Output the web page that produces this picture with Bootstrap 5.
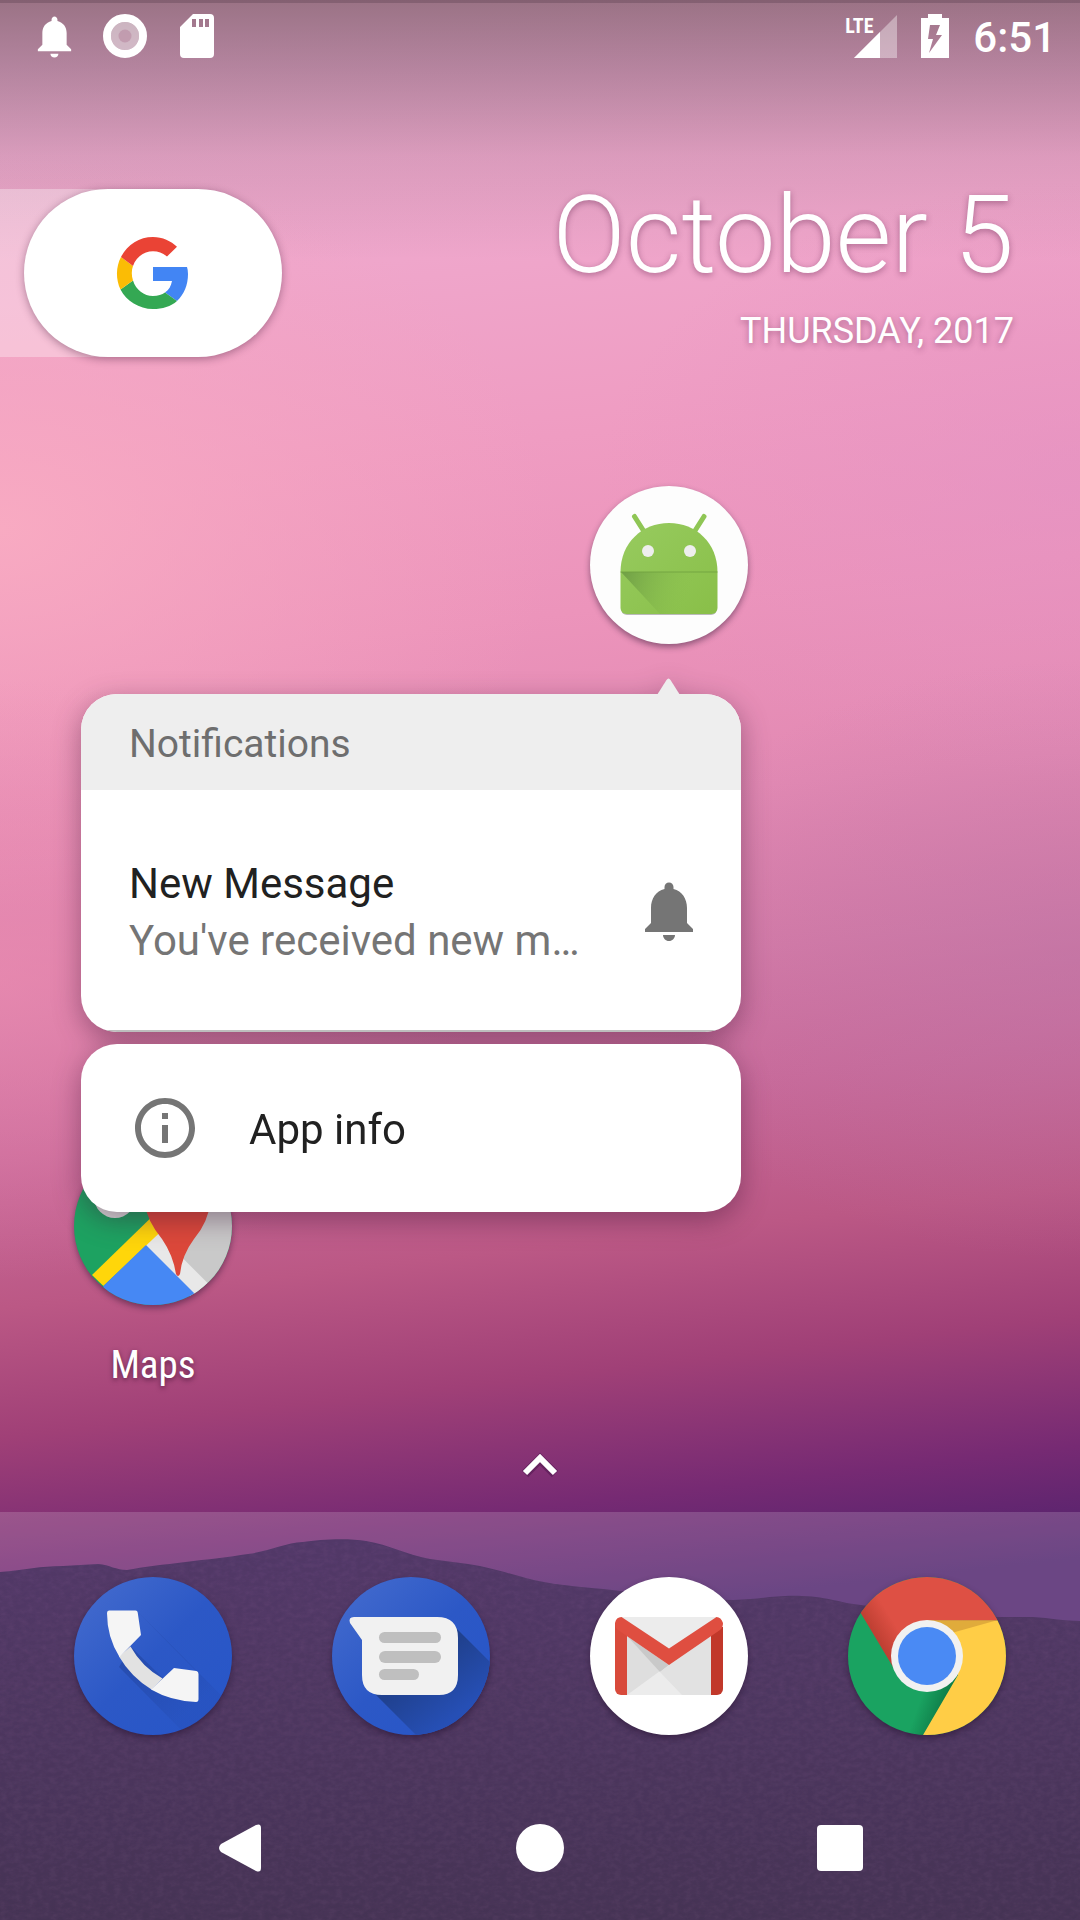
<!DOCTYPE html>
<html lang="en">
<head>
<meta charset="utf-8">
<meta name="viewport" content="width=device-width, initial-scale=1">
<title>Home screen</title>
<link href="https://cdn.jsdelivr.net/npm/bootstrap@5.3.0/dist/css/bootstrap.min.css" rel="stylesheet">
<style>
  body { font-family: Roboto, "Open Sans", sans-serif; background: #4b3459; }
  button { appearance: none; border: 0; padding: 0; background: none; color: inherit; display: block; }
  svg { display: block; overflow: visible; }
  .wallpaper { z-index: -1; }
  .status-bar { height: 72px; padding: 0 24px 0 31px; }
  .status-left { gap: 25px; }
  .clock { font-size: 42px; line-height: 42px; font-weight: 500; padding-top: 4px; }
  .lte-label { font-family: "Roboto Condensed", Roboto, sans-serif; font-size: 20px; line-height: 20px; font-weight: 700; top: 1px; left: -9px; }
  .widget-row { margin-top: 117px; height: 168px; }
  .search-tab { width: 282px; padding-left: 24px; }
  .search-tab::before { content: ""; position: absolute; inset: 0 156px 0 0; background: rgba(255,255,255,.32); }
  .search-pill { position: relative; width: 258px; height: 168px; border-radius: 84px; background: #fff; box-shadow: 0 2px 8px rgba(60,20,50,.4); }
  .date-widget { padding-right: 66px; text-shadow: 0 2px 6px rgba(90,30,70,.45); }
  .date-day { font-size: 108px; line-height: 108px; font-weight: 300; margin-top: -8px; }
  .date-year { font-size: 36px; line-height: 48px; margin-top: 18px; }
  .cells { padding: 0 24px; }
  .row-one { margin-top: 129px; }
  .row-two { margin-top: 503px; }
  .launcher { filter: drop-shadow(0 3px 3px rgba(30,10,40,.45)); }
  .launcher-label { font-family: "Roboto Condensed", Roboto, sans-serif; font-size: 39px; line-height: 48px; margin-top: 36px; color: #fff; text-shadow: 0 2px 5px rgba(50,10,40,.6); }
  .popup { top: 208px; right: 57px; width: 660px; z-index: 5; filter: drop-shadow(0 8px 14px rgba(60,20,50,.42)); }
  .popup-arrow { right: 61px; top: -16px; }
  .popup-card { border-radius: 36px; background: #fff; overflow: hidden; }
  .popup-head { height: 96px; padding: 4px 48px 0; background: #eee; color: #6e6e6e; font-size: 39px; font-weight: 400; line-height: 48px; }
  .popup-note { height: 242px; padding: 2px 36px 0 48px; border-bottom: 2px solid #bdbdbd; }
  .popup-text { font-size: 42px; line-height: 57px; padding-top: 2px; color: #212121; }
  .popup-text .muted-line { color: #757575; }
  .popup-second { margin-top: 12px; height: 168px; padding: 0 48px; gap: 48px; width: 100%; font-size: 42px; line-height: 48px; color: #212121; }
  .popup-second span { padding-top: 4px; }
  .drawer-hint { padding: 64px 0 32px; }
  .dock { background: rgba(255,255,255,.17); padding-top: 65px; height: 408px; }
  .nav-keys { padding: 0 90px; height: 144px; }
</style>
<script src="https://cdn.jsdelivr.net/npm/bootstrap@5.3.0/dist/js/bootstrap.bundle.min.js"></script>
</head>
<body class="position-relative min-vh-100 d-flex flex-column overflow-x-hidden text-white">

<svg class="wallpaper position-absolute top-0 start-0 w-100 h-100" viewBox="0 0 1080 1920" preserveAspectRatio="none" aria-hidden="true">
  <defs>
    <linearGradient id="sky" gradientUnits="userSpaceOnUse" x1="540" y1="0" x2="720" y2="1600">
      <stop offset="0" stop-color="#e6a9ca"/>
      <stop offset=".15" stop-color="#efa6cb"/>
      <stop offset=".27" stop-color="#ef9cc2"/>
      <stop offset=".38" stop-color="#ec94bb"/>
      <stop offset=".5" stop-color="#e289b3"/>
      <stop offset=".6" stop-color="#d47aa7"/>
      <stop offset=".68" stop-color="#c96a9a"/>
      <stop offset=".77" stop-color="#bb5885"/>
      <stop offset=".85" stop-color="#a04077"/>
      <stop offset=".93" stop-color="#762a73"/>
      <stop offset="1" stop-color="#4d216c"/>
    </linearGradient>
    <radialGradient id="peach" gradientUnits="userSpaceOnUse" cx="0" cy="0" r="1" gradientTransform="translate(0 530) scale(560 380)">
      <stop offset="0" stop-color="#f9acc2" stop-opacity=".9"/><stop offset="1" stop-color="#f6a4bf" stop-opacity="0"/>
    </radialGradient>
    <radialGradient id="rose" gradientUnits="userSpaceOnUse" cx="0" cy="0" r="1" gradientTransform="translate(0 980) scale(480 300)">
      <stop offset="0" stop-color="#ec8cb0" stop-opacity=".65"/><stop offset="1" stop-color="#e886ac" stop-opacity="0"/>
    </radialGradient>
    <radialGradient id="orchid" gradientUnits="userSpaceOnUse" cx="0" cy="0" r="1" gradientTransform="translate(1080 480) scale(480 300)">
      <stop offset="0" stop-color="#e392c4" stop-opacity=".6"/><stop offset="1" stop-color="#e392c4" stop-opacity="0"/>
    </radialGradient>
    <radialGradient id="mauve" gradientUnits="userSpaceOnUse" cx="0" cy="0" r="1" gradientTransform="translate(1080 960) scale(460 300)">
      <stop offset="0" stop-color="#ba76a6" stop-opacity=".5"/><stop offset="1" stop-color="#ba76a6" stop-opacity="0"/>
    </radialGradient>
    <linearGradient id="scrim" x1="0" y1="0" x2="0" y2="1">
      <stop offset="0" stop-color="#3a2d2d" stop-opacity=".44"/><stop offset=".25" stop-color="#40303a" stop-opacity=".31"/><stop offset=".6" stop-color="#40303a" stop-opacity=".1"/><stop offset="1" stop-color="#40303a" stop-opacity="0"/>
    </linearGradient>
    <linearGradient id="hill" x1="0" y1="0" x2="0" y2="1">
      <stop offset="0" stop-color="#2f104a"/><stop offset=".35" stop-color="#2b0f42"/><stop offset="1" stop-color="#200a32"/>
    </linearGradient>
    <filter id="grain" x="0" y="0" width="1" height="1">
      <feTurbulence type="fractalNoise" baseFrequency=".14 .22" numOctaves="3" seed="4"/>
      <feColorMatrix values="0 0 0 0 .55  0 0 0 0 .2  0 0 0 0 .5  .5 0 0 0 -.16"/>
      <feComposite in2="SourceGraphic" operator="in"/>
    </filter>
  </defs>
  <rect width="1080" height="1920" fill="url(#sky)"/>
  <rect width="1080" height="1920" fill="url(#peach)"/>
  <rect width="1080" height="1920" fill="url(#rose)"/>
  <rect width="1080" height="1920" fill="url(#orchid)"/>
  <rect width="1080" height="1920" fill="url(#mauve)"/>
  <rect width="1080" height="260" fill="url(#scrim)"/>
  <rect width="1080" height="3" fill="#5a3c4c" opacity=".35"/>
  <path fill="url(#hill)" d="M0 1572C25 1570 40 1566 63 1566L98 1564C110 1565 116 1570 127 1570C160 1564 210 1560 248 1554C270 1551 285 1543 303 1542C320 1539 350 1538 366 1541C390 1545 405 1554 430 1559L468 1564C500 1569 520 1578 544 1582C570 1587 600 1588 620 1591C660 1596 700 1600 733 1600C765 1599 775 1595 802 1596C830 1597 840 1603 861 1605C910 1611 950 1617 999 1617L1033 1617C1050 1618 1065 1621 1080 1621V1920H0Z"/>
  <path filter="url(#grain)" opacity=".25" d="M0 1572L63 1566L98 1564L127 1570L248 1554L303 1542L366 1541L430 1559L468 1564L544 1582L620 1591L733 1600L802 1596L861 1605L999 1617L1080 1621V1920H0Z"/>
</svg>

<header class="status-bar d-flex align-items-center justify-content-between">
  <div class="status-left d-flex align-items-center">
    <svg width="47" height="48" viewBox="0 0 24 24" fill="#fff" role="img" aria-label="Notification"><path d="M12 23c1.100 0 2-.8 2-1.900h-4.100c0 1.100.9 1.900 2.100 1.900zM18.200 16.500V10.500c0-3.200-1.700-5.400-4.700-6.200V3.600c0-.9-.7-1.600-1.500-1.600s-1.500.7-1.500 1.600v.7c-3 .8-4.700 3-4.700 6.200v6L3.500 18.800v1h17v-1z"/></svg>
    <svg width="44" height="44" viewBox="0 0 44 44" role="img" aria-label="Recording"><circle cx="22" cy="22" r="18" fill="none" stroke="#fff" stroke-width="8"/><circle cx="22" cy="22" r="14" fill="#fff" opacity=".45"/><circle cx="22" cy="22" r="6.500" fill="#b98aa2" opacity=".6"/></svg>
    <svg class="ms-2" width="34" height="44" viewBox="0 0 34 44" role="img" aria-label="SD card"><path fill="#fff" fill-rule="evenodd" d="M13 0H30a4 4 0 0 1 4 4V40a4 4 0 0 1-4 4H4a4 4 0 0 1-4-4V13ZM12 5v8h4V5ZM19 5v8h4V5ZM25 5v8h4V5Z"/></svg>
  </div>
  <div class="d-flex align-items-center">
    <div class="position-relative me-4">
      <svg width="43" height="43" viewBox="0 0 43 43" role="img" aria-label="Signal"><path d="M43 0V43H0Z" fill="#fff" opacity=".38"/><path d="M26 17V43H0Z" fill="#fff"/></svg>
      <span class="lte-label position-absolute">LTE</span>
    </div>
    <svg class="me-4" width="28" height="44" viewBox="0 0 28 44" role="img" aria-label="Battery charging"><path fill="#fff" fill-rule="evenodd" d="M7 0H21V4H28V44H0V4H7ZM9 11L7 25H12L8 39L21 21H15L19 11Z"/></svg>
    <span class="clock">6:51</span>
  </div>
</header>

<main class="flex-grow-1 d-flex flex-column">
  <div class="widget-row d-flex justify-content-between">
    <div class="search-tab position-relative">
      <button class="search-pill d-flex align-items-center justify-content-center" type="button" aria-label="Google search">
        <svg width="73" height="72" viewBox="0 0 73 72"><path fill="#4285f4" d="M70 30H36V44H55C54 49 52 53 48 55.500L60 64C67 57.500 71 48 71 37Q71 33 70 30Z"/><path fill="#34a853" d="M60 64L48 55.500C45 57.500 41 59 36 59C27 59 19 53 16 43.500L3.500 52.500C9.500 64 22 72 36 72C45.500 72 54 69.500 60 64Z"/><path fill="#fbbc05" d="M16 43.500C14.400 38.500 14.400 33 16 29L4 20C-1.300 30 -1.300 42.500 3.500 52.500Z"/><path fill="#ea4335" d="M16 29C19 20 27 14.300 36 14.300C41.500 14.300 46 16 50 19.500L60 9.800C54 4 45.500 0 36 0C22 0 10 8 4 20Z"/></svg>
      </button>
    </div>
    <div class="date-widget text-end">
      <div class="date-day">October 5</div>
      <div class="date-year">THURSDAY, 2017</div>
    </div>
  </div>

  <div class="cells row-one">
    <div class="row g-0">
      <div class="col-3 offset-6 position-relative d-flex flex-column align-items-center">
        <button class="launcher" type="button" aria-label="Android app">
          <svg width="158" height="158" viewBox="0 0 158 158">
            <defs>
              <linearGradient id="andShade" gradientUnits="userSpaceOnUse" x1="35" y1="90" x2="100" y2="112"><stop offset="0" stop-color="#5d8a3c" stop-opacity=".6"/><stop offset="1" stop-color="#8bc34a" stop-opacity="0"/></linearGradient>
              <linearGradient id="andBody" x1="0" y1="0" x2="1" y2="1"><stop offset="0" stop-color="#97cb5f"/><stop offset="1" stop-color="#89bf48"/></linearGradient>
            </defs>
            <circle cx="79" cy="79" r="79" fill="#fdfdfd"/>
            <path d="M31 123a6 6 0 0 0 6 6H121a6 6 0 0 0 6-6Z" fill="#777" opacity=".5"/>
            <path d="M44.500 30.500L54 45.500M114 30.500L104.500 45.500" stroke="#8fc655" stroke-width="5" stroke-linecap="round"/>
            <path d="M30.500 86C30.500 57 52 37 79 37S127.500 57 127.500 86V122a6 6 0 0 1-6 6H36.500a6 6 0 0 1-6-6Z" fill="url(#andBody)"/>
            <path d="M31 86H127V128H70Z" fill="url(#andShade)"/>
            <path d="M30.500 86H127.500" stroke="#6f9f3f" stroke-width="1" opacity=".8"/>
            <circle cx="58" cy="65" r="6" fill="#eee"/><circle cx="100" cy="65" r="6" fill="#eee"/>
          </svg>
        </button>
        <section class="popup position-absolute" aria-label="App shortcuts">
          <svg class="popup-arrow position-absolute" width="23" height="17" viewBox="0 0 23 17" aria-hidden="true"><path d="M0 17L9.500 2Q11.500 -1 13.500 2L23 17Z" fill="#eee"/></svg>
          <div class="popup-card">
            <h2 class="popup-head d-flex align-items-center mb-0">Notifications</h2>
            <div class="popup-note d-flex align-items-center justify-content-between">
              <div class="popup-text">
                <div>New Message</div>
                <div class="muted-line">You've received new m…</div>
              </div>
              <svg width="72" height="72" viewBox="0 0 24 24" fill="#757575" aria-hidden="true"><path d="M12 22c1.100 0 2-.9 2-2h-4c0 1.100.9 2 2 2zm6-6v-5c0-3.070-1.640-5.640-4.500-6.320V4c0-.83-.67-1.500-1.500-1.500s-1.500.67-1.500 1.500v.68C7.630 5.360 6 7.920 6 11v5l-2 2v1h16v-1l-2-2z"/></svg>
            </div>
          </div>
          <button class="popup-card popup-second d-flex align-items-center" type="button">
            <svg width="72" height="72" viewBox="0 0 24 24" fill="#757575" aria-hidden="true"><path d="M11 17h2v-6h-2v6zm1-15C6.480 2 2 6.480 2 12s4.480 10 10 10 10-4.480 10-10S17.520 2 12 2zm0 18c-4.410 0-8-3.590-8-8s3.590-8 8-8 8 3.590 8 8-3.590 8-8 8zM11 9h2V7h-2v2z"/></svg>
            <span>App info</span>
          </button>
        </section>
      </div>
    </div>
  </div>

  <div class="cells row-two">
    <div class="row g-0">
      <div class="col-3">
        <button class="w-100 d-flex flex-column align-items-center" type="button">
          <svg class="launcher" width="158" height="158" viewBox="0 0 158 158" aria-hidden="true">
            <defs><clipPath id="disc"><circle cx="79" cy="79" r="79"/></clipPath></defs>
            <g clip-path="url(#disc)">
              <rect width="158" height="158" fill="#1da261"/>
              <path d="M75 60H158V158H120Z" fill="#c9c9c9"/>
              <path d="M84 78L110.600 113L133.600 136L120 148L68 96Z" fill="#e8e8e8"/>
              <path d="M88 60L18 128L29.400 139L98 74Z" fill="#ffd60a"/>
              <path d="M72 98L29.400 139V158H132L120 146Z" fill="#4688f4"/>
              <circle cx="41" cy="50" r="21" fill="#dcdcdc"/>
              <path d="M68 50Q74 76 88 92Q99 108 102 127Q104 131 106 127Q108 108 120 92Q134 76 138 50Z" fill="#dc483a"/>
            </g>
          </svg>
          <span class="launcher-label">Maps</span>
        </button>
      </div>
    </div>
  </div>

  <button class="drawer-hint mx-auto" type="button" aria-label="All apps">
    <svg width="36" height="24" viewBox="0 0 36 24"><path d="M3 21L18 6L33 21" fill="none" stroke="#3c1040" stroke-opacity=".4" stroke-width="9"/><path d="M3 20L18 5L33 20" fill="none" stroke="#fff" stroke-width="6"/></svg>
  </button>
</main>

<footer class="dock d-flex flex-column justify-content-between mt-auto">
  <nav class="cells" aria-label="Favourite apps">
    <div class="row g-0">
      <div class="col-3 d-flex justify-content-center">
        <button class="launcher" type="button" aria-label="Phone">
          <svg width="158" height="158" viewBox="0 0 158 158">
            <defs>
              <linearGradient id="blue" x1=".1" y1=".1" x2=".9" y2=".9"><stop offset="0" stop-color="#4169cd"/><stop offset=".5" stop-color="#2c58c6"/><stop offset="1" stop-color="#2856c8"/></linearGradient>
              <linearGradient id="castA" gradientUnits="userSpaceOnUse" x1="60" y1="60" x2="120" y2="130"><stop offset="0" stop-color="#1f3f96" stop-opacity=".55"/><stop offset="1" stop-color="#1f3f96" stop-opacity=".12"/></linearGradient>
            </defs>
            <circle cx="79" cy="79" r="79" fill="url(#blue)"/>
            <g clip-path="url(#disc)"><path d="M64 35L158 129V158H112L45 90L57 70L89 101L122 94Z" fill="url(#castA)"/></g>
            <path d="M45 79.500L56.500 69.500Q68 90 88.500 101.500L77.500 112.500Q57 100 45 79.500Z" fill="#e2e2e2"/>
            <path d="M35 33.500H61.500Q63.500 33.500 63.700 35.500L67 58L45.500 80Q33 60 33 36Q33 33.500 35 33.500Z" fill="#f5f5f5"/>
            <path d="M100 91L122.500 94Q124.500 94.500 124.500 97V122Q124.500 125 122 125Q97 124 77 112.500Z" fill="#f5f5f5"/>
          </svg>
        </button>
      </div>
      <div class="col-3 d-flex justify-content-center">
        <button class="launcher" type="button" aria-label="Messages">
          <svg width="158" height="158" viewBox="0 0 158 158">
            <defs><linearGradient id="castB" gradientUnits="userSpaceOnUse" x1="80" y1="100" x2="115" y2="145"><stop offset="0" stop-color="#20418f"/><stop offset="1" stop-color="#264fb5"/></linearGradient></defs>
            <circle cx="79" cy="79" r="79" fill="url(#blue)"/>
            <g clip-path="url(#disc)"><path d="M123 50L170 97V170H96L37 111Z" fill="url(#castB)"/></g>
            <path d="M22 40H105Q126 40 126 61V98Q126 118 107 118H50Q30 118 30 98V63L18 46Q16 40 22 40Z" fill="#f1f1f1"/>
            <g fill="#bfbfbf"><rect x="47" y="55" width="62" height="11" rx="5.500"/><rect x="47" y="74" width="62" height="12" rx="6"/><rect x="47" y="92" width="40" height="11" rx="5.500"/></g>
          </svg>
        </button>
      </div>
      <div class="col-3 d-flex justify-content-center">
        <button class="launcher" type="button" aria-label="Gmail">
          <svg width="158" height="158" viewBox="0 0 158 158">
            <circle cx="79" cy="79" r="79" fill="#fff"/>
            <rect x="31" y="40" width="96" height="78" fill="#ececec"/>
            <path d="M37 59L70 94L37 118Z" fill="#dedede"/>
            <path d="M37 59L79 88L70 95Z" fill="#c9c9c9"/>
            <path d="M79 88L121 59V118H92L70 95Z" fill="#e2e2e2"/>
            <path d="M25 46H37V118H31a6 6 0 0 1-6-6Z" fill="#d84a3b"/>
            <path d="M121 50H133V112a6 6 0 0 1-6 6H121Z" fill="#c1382a"/>
            <path d="M31.500 40L79 71.500L126.500 40Q131 40 133 46Q133 51 130 53L79 88L28 53Q25 51 25 46Q26 40 31.500 40Z" fill="#df4e40"/>
          </svg>
        </button>
      </div>
      <div class="col-3 d-flex justify-content-center">
        <button class="launcher" type="button" aria-label="Chrome">
          <svg width="158" height="158" viewBox="0 0 158 158">
            <defs>
              <linearGradient id="cRed" gradientUnits="userSpaceOnUse" x1="24" y1="68" x2="50" y2="52"><stop offset="0" stop-color="#b53a2d"/><stop offset="1" stop-color="#de5044"/></linearGradient>
              <linearGradient id="cGreen" gradientUnits="userSpaceOnUse" x1="96" y1="126" x2="74" y2="118"><stop offset="0" stop-color="#0f7f4a"/><stop offset="1" stop-color="#1aa361"/></linearGradient>
            </defs>
            <g clip-path="url(#disc)">
              <rect width="158" height="158" fill="url(#cGreen)"/>
              <path d="M79 43.300H158V158H75L110 98Z" fill="#ffcd46"/>
              <path d="M79 43.300H149L100 57Z" fill="#dba43a" opacity=".85"/>
              <path d="M13 36.500L0 0H158V43.300H79L48 95Z" fill="url(#cRed)"/>
            </g>
            <circle cx="79" cy="79" r="36" fill="#f1f1f1"/><circle cx="79" cy="79" r="29" fill="#4a8af4"/>
          </svg>
        </button>
      </div>
    </div>
  </nav>
  <nav class="nav-keys d-flex flex-column justify-content-center" aria-label="System navigation">
    <div class="row g-0 align-items-center">
      <div class="col-4 d-flex justify-content-center"><button type="button" aria-label="Back"><svg width="42" height="48" viewBox="0 0 42 48"><path d="M2 20L37 1Q42 -1 42 4V44Q42 49 37 47L2 28Q-2 24 2 20Z" fill="#fff"/></svg></button></div>
      <div class="col-4 d-flex justify-content-center"><button type="button" aria-label="Home"><svg width="48" height="48" viewBox="0 0 48 48"><circle cx="24" cy="24" r="24" fill="#fff"/></svg></button></div>
      <div class="col-4 d-flex justify-content-center"><button type="button" aria-label="Recents"><svg width="46" height="46" viewBox="0 0 46 46"><rect width="46" height="46" rx="4" fill="#fff"/></svg></button></div>
    </div>
  </nav>
</footer>
</body>
</html>
